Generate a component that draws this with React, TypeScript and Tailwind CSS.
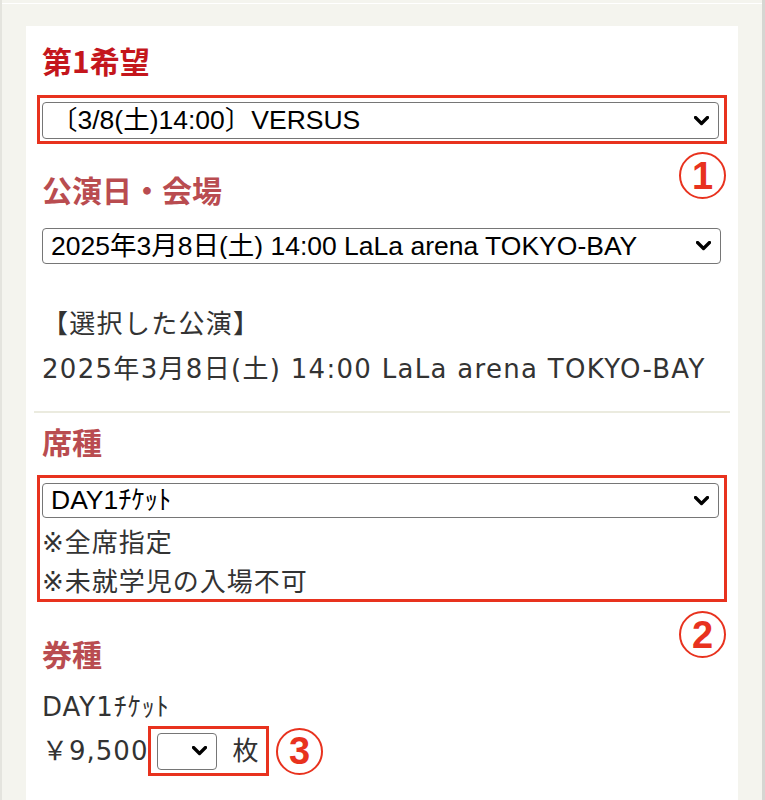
import React from "react"

const RED = "border-[#e8321e]"
const BODY = '"DejaVu Sans", "Noto Sans CJK JP", sans-serif'

function Chevron() {
	return (
		<svg
			viewBox="0 0 12 8"
			className="pointer-events-none absolute right-[10px] top-1/2 h-[10px] w-[15px] -translate-y-1/2"
		>
			<path d="M1.2 1.2 6 6 10.8 1.2" fill="none" stroke="#000" strokeWidth="2.6" strokeLinecap="round" strokeLinejoin="round" />
		</svg>
	)
}

function Select({ value, className = "" }: { value: string; className?: string }) {
	return (
		<div className={`relative ${className}`}>
			<select
				defaultValue={value}
				className="h-full w-full appearance-none rounded-[4px] border border-[#767676] bg-white pl-[8px] pr-[32px] text-[26.5px] leading-none tracking-normal text-black outline-none"
				style={{ fontFamily: '"Liberation Sans", "Noto Sans CJK JP", sans-serif' }}
			>
				<option value={value}>{value}</option>
			</select>
			<Chevron />
		</div>
	)
}

function Circled({ n }: { n: number }) {
	return (
		<div
			className="flex h-[47px] w-[47px] items-center justify-center rounded-full border-2 border-[#e8321e] text-[38px] font-bold leading-none text-[#e8321e]"
			style={{ fontFamily: '"Liberation Sans", sans-serif' }}
		>
			{n}
		</div>
	)
}

function Heading({ children, strong }: { children: React.ReactNode; strong?: boolean }) {
	return (
		<h2
			className={`text-[30px] font-bold leading-[36px] ${strong ? "text-[#c4161c]" : "text-[#b94c50]"}`}
			style={{ fontFamily: '"Noto Sans CJK JP", sans-serif' }}
		>
			{children}
		</h2>
	)
}

export default function App() {
	return (
		<div
			className="min-h-[800px] w-[765px] border-l-2 border-r-[3px] border-l-[#e4e4de] border-r-[#d6d6d2] bg-[#f4f4ee]"
			style={{ fontFamily: BODY }}
		>
			<div className="h-[4px] border-b border-white" />
			<div className="ml-[24px] mt-[22px] w-[712px] bg-white pb-[40px] pt-[16px]">
				{/* 第1希望 */}
				<div className="px-[16px]">
					<Heading strong>第1希望</Heading>
				</div>
				<div className="relative mx-[11px] mt-[17px]">
					<div className={`border-[3px] ${RED} pb-[2px] pl-[2px] pr-[5px] pt-[4px]`}>
						<Select value="〔3/8(土)14:00〕VERSUS" className="h-[37px]" />
					</div>
					<div className="absolute right-[1px] top-[57px]">
						<Circled n={1} />
					</div>
				</div>

				{/* 公演日・会場 */}
				<div className="mt-[27px] px-[16px]">
					<Heading>公演日・会場</Heading>
					<Select value="2025年3月8日(土) 14:00 LaLa arena TOKYO-BAY" className="mt-[21px] mr-[1px] h-[36px]" />
					<div className="mt-[38px] text-[26px] leading-[45px] tracking-[1.3px] text-[#333]">
						<p>【選択した公演】</p>
						<p>2025年3月8日(土) 14:00 LaLa arena TOKYO-BAY</p>
					</div>
				</div>

				<div className="mx-[8px] mt-[19px] h-[2px] bg-[#ebebdf]" />

				{/* 席種 */}
				<div className="mt-[10px] px-[16px]">
					<Heading>席種</Heading>
				</div>
				<div className="relative mx-[11px] mt-[16px]">
					<div className={`border-[3px] ${RED} pb-[0px] pl-[2px] pr-[5px] pt-[5px]`}>
						<Select value="DAY1ﾁｹｯﾄ" className="h-[35px]" />
						<div className="mb-[-3px] mt-[6px] text-[26px] leading-[39px] tracking-[1px] text-[#333]">
							<p>※全席指定</p>
							<p>※未就学児の入場不可</p>
						</div>
					</div>
					<div className="absolute right-[1px] top-[136px]">
						<Circled n={2} />
					</div>
				</div>

				{/* 券種 */}
				<div className="mt-[33px] px-[16px]">
					<Heading>券種</Heading>
					<p className="mt-[18px] text-[26px] leading-[36px] tracking-[1px] text-[#333]">DAY1ﾁｹｯﾄ</p>
					<div className="mt-[1px] flex items-center text-[26px] tracking-[1px] text-[#333]">
						<span>￥9,500</span>
						<div className={`flex h-[50px] items-center border-[3px] ${RED} pl-[6px] pr-[7px]`}>
							<Select value="" className="h-[37px] w-[60px]" />
							<span className="ml-[15px]">枚</span>
						</div>
						<div className="ml-[7px]">
							<Circled n={3} />
						</div>
					</div>
				</div>
			</div>
		</div>
	)
}
